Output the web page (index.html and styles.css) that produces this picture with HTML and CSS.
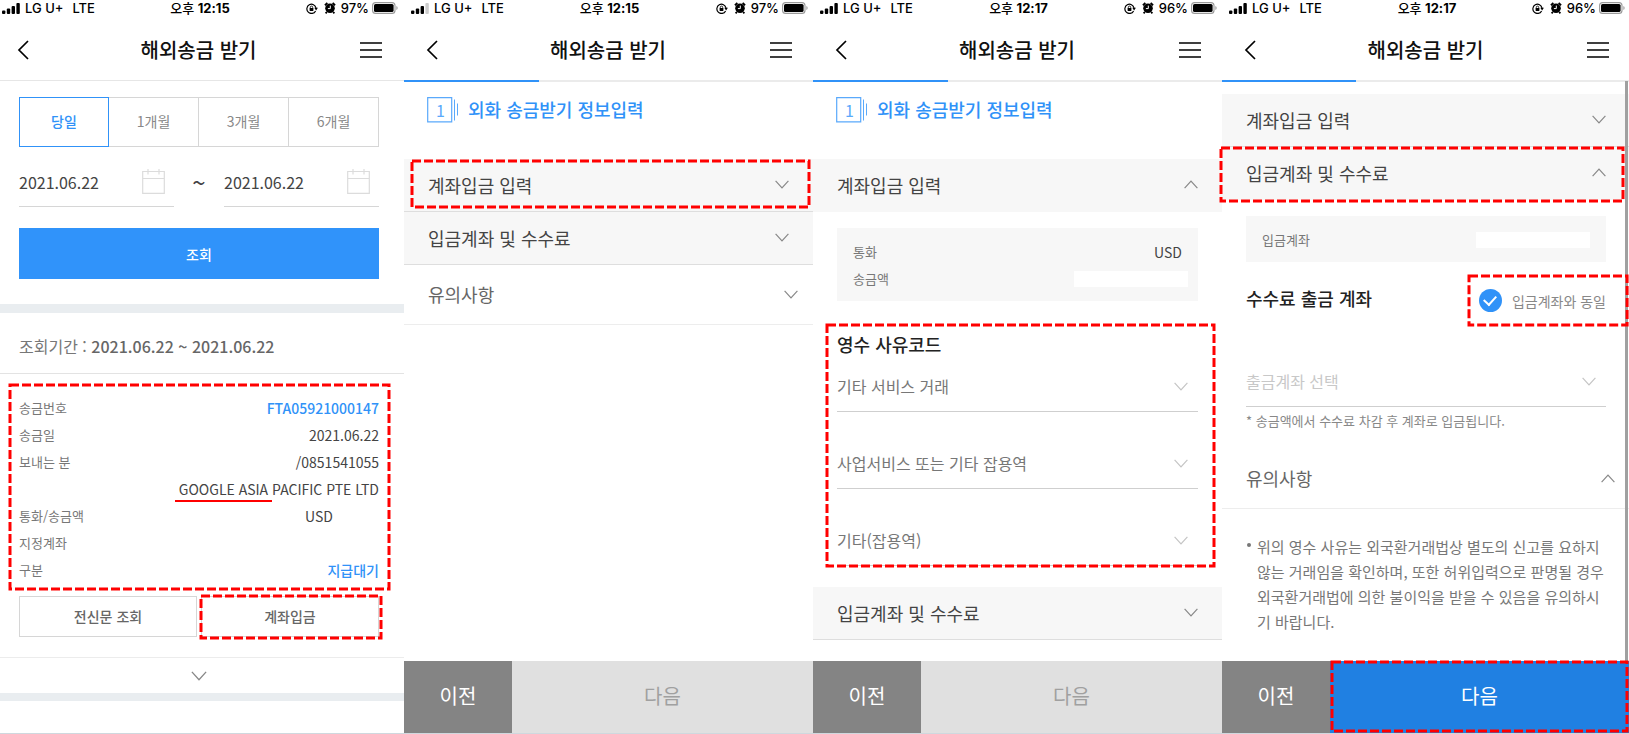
FILE: index.html
```html
<!DOCTYPE html>
<html lang="ko">
<head>
    <meta charset="UTF-8">
    <meta name="viewport" content="width=device-width, initial-scale=1.0">
    <title>해외송금 받기</title>
    <link rel="stylesheet" href="styles.css">
</head>
<body>

    <!-- Shared icons -->
    <svg class="icon-defs" aria-hidden="true">
        <symbol id="icon-signal" viewBox="0 0 18 11">
            <rect x="0" y="7.5" width="3.4" height="3.5" rx="1"/>
            <rect x="4.8" y="5.5" width="3.4" height="5.5" rx="1"/>
            <rect x="9.6" y="3" width="3.4" height="8" rx="1"/>
            <rect class="last-bar" x="14.4" y="0" width="3.4" height="11" rx="1"/>
        </symbol>
        <symbol id="icon-lock" viewBox="0 0 12 11">
            <path d="M9.6 7.9A4.6 4.6 0 1 1 10 5" fill="none" stroke="#000" stroke-width="1.2"/>
            <path d="M8.3 4.8h3.6L10.1 7.4z"/>
            <rect x="3.6" y="5" width="3.8" height="3" rx=".4"/>
            <path d="M4.3 5.2V4.3a1.2 1.2 0 0 1 2.4 0v.9" fill="none" stroke="#000" stroke-width=".8"/>
        </symbol>
        <symbol id="icon-alarm" viewBox="0 0 12 12">
            <circle cx="6" cy="6.3" r="4.8"/>
            <path d="M.9 3.2L3.4 1M11.1 3.2L8.6 1M2.8 10L1.6 11.4M9.2 10l1.2 1.4" fill="none" stroke="#000" stroke-width="1.8"/>
            <path d="M6.3 3.6v3H3.9" fill="none" stroke="#fff" stroke-width="1"/>
        </symbol>
        <symbol id="icon-battery" viewBox="0 0 26 12">
            <rect x=".6" y=".6" width="22.4" height="10.8" rx="3" fill="none" stroke="#9a9a9a" stroke-width="1.1"/>
            <rect x="2" y="2" width="19.6" height="8" rx="1.6"/>
            <path d="M24.4 4v4c.8-.4 1.2-1.1 1.2-2s-.4-1.6-1.2-2z" fill="#9a9a9a"/>
        </symbol>
        <symbol id="icon-back" viewBox="0 0 12 20">
            <path d="M11 1L2 10l9 9" fill="none" stroke="#000" stroke-width="1.7"/>
        </symbol>
        <symbol id="icon-menu" viewBox="0 0 22 18">
            <path d="M0 2h22M0 9h22M0 16h22" fill="none" stroke="#000" stroke-width="1.7"/>
        </symbol>
        <symbol id="icon-chevron" viewBox="0 0 14 9">
            <path d="M.6 .8L7 7.8l6.4-7" fill="none" stroke="currentColor" stroke-width="1.2"/>
        </symbol>
        <symbol id="icon-calendar" viewBox="0 0 23 25">
            <path d="M.7 2.5h21.6v21.8H.7zM.7 9.5h21.6M6 0v5.5M17 0v5.5" fill="none" stroke="#dcdcdc" stroke-width="1.2"/>
        </symbol>
        <symbol id="icon-step" viewBox="0 0 32 26">
            <path d="M.7 .7h24v24.2h-24z" fill="none" stroke="#5aa9fb" stroke-width="1.2"/>
            <path d="M27.5 2.5v21M30.5 6.5v12" fill="none" stroke="#5aa9fb" stroke-width="1"/>
        </symbol>
    </svg>

    <main class="screens">

        <!-- Transfer lookup -->
        <section class="screen screen-first">
            <div class="status-bar">
                <div class="status-left">
                    <svg class="signal"><use href="#icon-signal"/></svg>
                    <span>LG U+</span>
                    <span class="network">LTE</span>
                </div>
                <div class="status-time">오후 <b>12:15</b></div>
                <div class="status-right">
                    <svg class="lock"><use href="#icon-lock"/></svg>
                    <svg class="alarm"><use href="#icon-alarm"/></svg>
                    <span>97%</span>
                    <svg class="battery"><use href="#icon-battery"/></svg>
                </div>
            </div>
            <header class="header">
                <button type="button" aria-label="뒤로"><svg class="back"><use href="#icon-back"/></svg></button>
                <h1>해외송금 받기</h1>
                <button type="button" aria-label="메뉴"><svg class="menu"><use href="#icon-menu"/></svg></button>
            </header>

            <form class="search">
                <div class="tabs">
                    <button type="button" class="active">당일</button>
                    <button type="button">1개월</button>
                    <button type="button">3개월</button>
                    <button type="button">6개월</button>
                </div>
                <div class="dates">
                    <div class="date">
                        <input type="text" value="2021.06.22" aria-label="시작일">
                        <svg><use href="#icon-calendar"/></svg>
                    </div>
                    <span class="tilde">~</span>
                    <div class="date">
                        <input type="text" value="2021.06.22" aria-label="종료일">
                        <svg><use href="#icon-calendar"/></svg>
                    </div>
                </div>
                <button type="button" class="search-button">조회</button>
            </form>

            <div class="band"></div>
            <p class="period">조회기간 : <b>2021.06.22 ~ 2021.06.22</b></p>

            <div class="transfer">
                <dl class="details">
                    <div><dt>송금번호</dt><dd class="blue">FTA05921000147</dd></div>
                    <div><dt>송금일</dt><dd>2021.06.22</dd></div>
                    <div><dt>보내는 분</dt><dd>/0851541055</dd></div>
                    <div><dt></dt><dd><span class="underlined">GOOGLE ASIA</span> PACIFIC PTE LTD</dd></div>
                    <div><dt>통화/송금액</dt><dd class="currency">USD</dd></div>
                    <div><dt>지정계좌</dt><dd></dd></div>
                    <div><dt>구분</dt><dd class="blue">지급대기</dd></div>
                </dl>
                <svg class="mark mark-details"><rect width="100%" height="100%"/></svg>
            </div>
            <div class="actions">
                <button type="button">전신문 조회</button>
                <div class="action">
                    <button type="button">계좌입금</button>
                    <svg class="mark mark-action"><rect width="100%" height="100%"/></svg>
                </div>
            </div>
            <button type="button" class="more" aria-label="더보기"><svg class="chevron"><use href="#icon-chevron"/></svg></button>
            <div class="band band-thin"></div>
        </section>

        <!-- Step 1, all sections closed -->
        <section class="screen">
            <div class="status-bar">
                <div class="status-left weak">
                    <svg class="signal"><use href="#icon-signal"/></svg>
                    <span>LG U+</span>
                    <span class="network">LTE</span>
                </div>
                <div class="status-time">오후 <b>12:15</b></div>
                <div class="status-right">
                    <svg class="lock"><use href="#icon-lock"/></svg>
                    <svg class="alarm"><use href="#icon-alarm"/></svg>
                    <span>97%</span>
                    <svg class="battery"><use href="#icon-battery"/></svg>
                </div>
            </div>
            <header class="header">
                <button type="button" aria-label="뒤로"><svg class="back"><use href="#icon-back"/></svg></button>
                <h1>해외송금 받기</h1>
                <button type="button" aria-label="메뉴"><svg class="menu"><use href="#icon-menu"/></svg></button>
            </header>
            <div class="progress"><div></div></div>

            <div class="step">
                <span class="step-number"><svg><use href="#icon-step"/></svg>1</span>
                <h2>외화 송금받기 정보입력</h2>
            </div>
            <div class="accordion">
                <button type="button">계좌입금 입력<svg class="chevron"><use href="#icon-chevron"/></svg></button>
                <svg class="mark mark-deposit"><rect width="100%" height="100%"/></svg>
            </div>
            <div class="accordion">
                <button type="button">입금계좌 및 수수료<svg class="chevron"><use href="#icon-chevron"/></svg></button>
            </div>
            <div class="accordion notice">
                <button type="button">유의사항<svg class="chevron"><use href="#icon-chevron"/></svg></button>
            </div>

            <footer class="footer">
                <button type="button" class="prev">이전</button>
                <div class="next"><button type="button" disabled>다음</button></div>
            </footer>
        </section>

        <!-- Step 1, reason code -->
        <section class="screen">
            <div class="status-bar">
                <div class="status-left">
                    <svg class="signal"><use href="#icon-signal"/></svg>
                    <span>LG U+</span>
                    <span class="network">LTE</span>
                </div>
                <div class="status-time">오후 <b>12:17</b></div>
                <div class="status-right">
                    <svg class="lock"><use href="#icon-lock"/></svg>
                    <svg class="alarm"><use href="#icon-alarm"/></svg>
                    <span>96%</span>
                    <svg class="battery"><use href="#icon-battery"/></svg>
                </div>
            </div>
            <header class="header">
                <button type="button" aria-label="뒤로"><svg class="back"><use href="#icon-back"/></svg></button>
                <h1>해외송금 받기</h1>
                <button type="button" aria-label="메뉴"><svg class="menu"><use href="#icon-menu"/></svg></button>
            </header>
            <div class="progress"><div></div></div>

            <div class="step">
                <span class="step-number"><svg><use href="#icon-step"/></svg>1</span>
                <h2>외화 송금받기 정보입력</h2>
            </div>
            <div class="accordion open">
                <button type="button">계좌입금 입력<svg class="chevron up"><use href="#icon-chevron"/></svg></button>
            </div>
            <dl class="info">
                <div><dt>통화</dt><dd>USD</dd></div>
                <div><dt>송금액</dt><dd class="blank blank-wide"></dd></div>
            </dl>
            <div class="reason">
                <h3>영수 사유코드</h3>
                <div class="field">
                    <select aria-label="사유 대분류"><option>기타 서비스 거래</option></select>
                    <svg class="chevron"><use href="#icon-chevron"/></svg>
                </div>
                <div class="field">
                    <select aria-label="사유 중분류"><option>사업서비스 또는 기타 잡용역</option></select>
                    <svg class="chevron"><use href="#icon-chevron"/></svg>
                </div>
                <div class="field">
                    <select aria-label="사유 소분류"><option>기타(잡용역)</option></select>
                    <svg class="chevron"><use href="#icon-chevron"/></svg>
                </div>
                <svg class="mark mark-reason"><rect width="100%" height="100%"/></svg>
            </div>
            <div class="accordion">
                <button type="button">입금계좌 및 수수료<svg class="chevron"><use href="#icon-chevron"/></svg></button>
            </div>

            <footer class="footer">
                <button type="button" class="prev">이전</button>
                <div class="next"><button type="button" disabled>다음</button></div>
            </footer>
        </section>

        <!-- Step 1, account and fee -->
        <section class="screen screen-last">
            <div class="status-bar">
                <div class="status-left">
                    <svg class="signal"><use href="#icon-signal"/></svg>
                    <span>LG U+</span>
                    <span class="network">LTE</span>
                </div>
                <div class="status-time">오후 <b>12:17</b></div>
                <div class="status-right">
                    <svg class="lock"><use href="#icon-lock"/></svg>
                    <svg class="alarm"><use href="#icon-alarm"/></svg>
                    <span>96%</span>
                    <svg class="battery"><use href="#icon-battery"/></svg>
                </div>
            </div>
            <header class="header">
                <button type="button" aria-label="뒤로"><svg class="back"><use href="#icon-back"/></svg></button>
                <h1>해외송금 받기</h1>
                <button type="button" aria-label="메뉴"><svg class="menu"><use href="#icon-menu"/></svg></button>
            </header>
            <div class="progress"><div></div></div>

            <div class="scroll-area">
                <div class="accordion">
                    <button type="button">계좌입금 입력<svg class="chevron"><use href="#icon-chevron"/></svg></button>
                </div>
                <div class="accordion open">
                    <button type="button">입금계좌 및 수수료<svg class="chevron up"><use href="#icon-chevron"/></svg></button>
                    <svg class="mark mark-fee"><rect width="100%" height="100%"/></svg>
                </div>
                <dl class="info">
                    <div><dt>입금계좌</dt><dd class="blank"></dd></div>
                </dl>
                <div class="fee">
                    <h3>수수료 출금 계좌</h3>
                    <div class="same">
                        <input type="checkbox" id="same" checked>
                        <label for="same">입금계좌와 동일</label>
                        <svg class="mark mark-same"><rect width="100%" height="100%"/></svg>
                    </div>
                </div>
                <div class="field field-account">
                    <select aria-label="출금계좌" disabled><option>출금계좌 선택</option></select>
                    <svg class="chevron"><use href="#icon-chevron"/></svg>
                </div>
                <p class="hint">* 송금액에서 수수료 차감 후 계좌로 입금됩니다.</p>
                <div class="accordion notice">
                    <button type="button">유의사항<svg class="chevron up"><use href="#icon-chevron"/></svg></button>
                </div>
                <ul class="notes">
                    <li>위의 영수 사유는 외국환거래법상 별도의 신고를 요하지 않는 거래임을 확인하며, 또한 허위입력으로 판명될 경우 외국환거래법에 의한 불이익을 받을 수 있음을 유의하시기 바랍니다.</li>
                </ul>
                <div class="scrollbar"></div>
            </div>

            <footer class="footer">
                <button type="button" class="prev">이전</button>
                <div class="next">
                    <button type="button">다음</button>
                    <svg class="mark mark-next"><rect width="100%" height="100%"/></svg>
                </div>
            </footer>
        </section>

    </main>

</body>
</html>
```

FILE: styles.css
```css
/* General Styles */
* {
    box-sizing: border-box;
}

body {
    font-family: "Noto Sans CJK KR", sans-serif;
    background-color: #fff;
    color: #444;
    margin: 0;
}

h1, h2, h3, p, dl, dd, ul {
    margin: 0;
    padding: 0;
}

button, input, select {
    font-family: inherit;
    color: inherit;
    background: none;
    border: none;
    border-radius: 0;
    margin: 0;
    padding: 0;
}

button {
    cursor: pointer;
}

svg {
    display: block;
    flex: none;
}

.icon-defs {
    position: absolute;
    width: 0;
    height: 0;
}

.screens {
    display: grid;
    grid-template-columns: 404fr 409fr 409fr 407fr;
    min-height: 100vh;
    border-bottom: 1px solid #cfd8de;
}

.screen {
    --left: 24px;
    --right: 24px;
    display: flex;
    flex-direction: column;
    min-width: 0;
}

.screen-first {
    --left: 19px;
    --right: 25px;
}

.screen-last {
    --right: 23px;
}

/* Status bar */
.status-bar {
    display: grid;
    grid-template-columns: 1fr auto 1fr;
    align-items: center;
    height: 16px;
    padding: 0 calc(var(--right) - 19px) 0 calc(var(--left) - 17px);
    font-family: Inter, "Noto Sans CJK KR", sans-serif;
    font-size: 13px;
    font-weight: 500;
    line-height: 16px;
    color: #000;
    white-space: nowrap;
}

.status-left, .status-right {
    display: flex;
    align-items: center;
}

.status-right {
    justify-content: flex-end;
}

.signal {
    width: 18px;
    height: 11px;
    margin-right: 5px;
}

.weak {
    --last-bar: #ccc;
}

.last-bar {
    fill: var(--last-bar, #000);
}

.network {
    margin-left: 9px;
}

.status-time b {
    font-weight: 700;
}

.lock {
    width: 12px;
    height: 11px;
    margin-right: 6px;
}

.alarm {
    width: 12px;
    height: 12px;
    margin-right: 5px;
}

.battery {
    width: 26px;
    height: 12px;
    margin-left: 3px;
}

/* Header */
.header {
    display: flex;
    align-items: center;
    justify-content: space-between;
    height: 64px;
    padding: 4px calc(var(--right) - 3px) 0 calc(var(--left) - 2px);
}

.header h1 {
    font-size: 20px;
    font-weight: 500;
    line-height: 30px;
    color: #111;
}

.back {
    width: 12px;
    height: 20px;
    margin-right: 8px;
}

.menu {
    width: 22px;
    height: 18px;
}

.progress {
    height: 2px;
    background-color: #ebebeb;
}

.progress div {
    width: 33%;
    height: 2px;
    background-color: #3092f8;
}

/* Search form */
.search {
    border-top: 1px solid #e6e6e6;
    padding: 16px var(--right) 25px var(--left);
}

.tabs {
    display: grid;
    grid-template-columns: repeat(4, 1fr);
    height: 50px;
}

.tabs button {
    padding-bottom: 2px;
    border: 1px solid #d6d6d6;
    border-left: none;
    font-size: 14px;
    color: #888;
}

.tabs .active {
    border: 1px solid #3092f8;
    font-weight: 500;
    color: #3092f8;
}

.dates {
    display: flex;
    align-items: center;
    margin-top: 10px;
}

.date {
    flex: 1;
    display: flex;
    align-items: center;
    min-width: 0;
    height: 50px;
    padding-right: 9px;
    border-bottom: 1px solid #d6d6d6;
}

.date input {
    flex: 1;
    min-width: 0;
    font-size: 16px;
    line-height: 24px;
}

.date svg {
    width: 23px;
    height: 25px;
}

.tilde {
    width: 50px;
    text-align: center;
    font-size: 24px;
    line-height: 24px;
}

.search-button {
    width: 100%;
    height: 51px;
    margin-top: 21px;
    background-color: #3093fa;
    font-size: 14px;
    font-weight: 500;
    color: #fff;
}

.band {
    height: 9px;
    background-color: #e9edf0;
}

.band-thin {
    height: 8px;
}

.period {
    padding: 21px var(--right) 15px var(--left);
    border-bottom: 1px solid #e3e3e3;
    font-size: 16px;
    line-height: 24px;
    color: #777;
}

.period b {
    font-weight: 500;
    color: #666;
}

/* Transfer details */
.transfer {
    position: relative;
    padding: 20px var(--right) 2px var(--left);
}

.details div, .info div {
    display: flex;
    justify-content: space-between;
    align-items: center;
    height: 27px;
}

dt {
    font-size: 13px;
    color: #777;
}

dd {
    font-size: 14px;
    color: #444;
}

dd.blue {
    font-weight: 500;
    color: #3092f8;
}

.currency {
    margin-right: 46px;
}

.underlined {
    position: relative;
}

.underlined::after {
    content: "";
    position: absolute;
    left: -4px;
    right: -4px;
    bottom: -3px;
    height: 2px;
    background-color: #f00;
}

.actions {
    display: grid;
    grid-template-columns: 1fr 1fr;
    gap: 4px;
    padding: 11px var(--right) 20px var(--left);
}

.actions button {
    width: 100%;
    height: 41px;
    padding-bottom: 2px;
    border: 1px solid #d6d6d6;
    font-size: 14px;
    font-weight: 500;
    color: #666;
}

.action {
    position: relative;
}

.more {
    display: flex;
    align-items: center;
    justify-content: center;
    height: 36px;
    padding: 0 var(--right) 0 var(--left);
    border-top: 1px solid #ececec;
}

.more .chevron {
    width: 16px;
    height: 10px;
}

/* Red dashed marks */
.mark {
    position: absolute;
    overflow: visible;
    pointer-events: none;
    z-index: 1;
}

.mark rect {
    fill: none;
    stroke: #f00;
    stroke-width: 3;
    stroke-dasharray: 9 3;
}

.mark-details {
    left: 10px;
    top: 11px;
    width: calc(100% - 25px);
    height: calc(100% - 7px);
}

.mark-action {
    left: 0;
    top: 0;
    width: calc(100% + 2px);
    height: calc(100% + 1px);
}

.mark-deposit {
    left: 8px;
    top: 2px;
    width: calc(100% - 12px);
    height: calc(100% - 6px);
}

.mark-reason {
    left: 14px;
    top: -6px;
    width: calc(100% - 22px);
    height: calc(100% + 6px);
}

.mark-fee {
    left: -1px;
    top: 1px;
    width: calc(100% - 5px);
    height: 53px;
}

.mark-same {
    left: -10px;
    top: -8px;
    width: calc(100% + 31px);
    height: calc(100% + 16px);
}

.mark-next {
    left: 2px;
    top: 1px;
    width: calc(100% - 4px);
    height: calc(100% - 3px);
}

/* Step title */
.step {
    display: flex;
    align-items: center;
    gap: 9px;
    padding: 15px var(--right) 36px calc(var(--left) - 1px);
}

.step-number {
    position: relative;
    width: 32px;
    height: 26px;
    padding-left: 9px;
    font-size: 16px;
    line-height: 26px;
    color: #5aa9fb;
}

.step-number svg {
    position: absolute;
    left: 0;
    top: 0;
    width: 32px;
    height: 26px;
}

.step h2 {
    padding-bottom: 2px;
    font-size: 18px;
    font-weight: 500;
    line-height: 24px;
    color: #3092f8;
}

/* Accordion */
.accordion {
    position: relative;
    background-color: #f7f7f7;
    border-bottom: 1px solid #dedede;
}

.accordion.open {
    border-bottom-color: #f7f7f7;
}

.accordion button {
    display: flex;
    align-items: center;
    justify-content: space-between;
    width: 100%;
    height: 52px;
    padding: 0 var(--right) 1px var(--left);
    font-size: 18px;
    color: #444;
}

.chevron {
    width: 14px;
    height: 9px;
    color: #888;
}

.chevron.up {
    transform: rotate(180deg);
}

.accordion.notice {
    background-color: #fff;
    border-bottom-color: #ededed;
}

.notice button {
    height: 59px;
    padding-right: calc(var(--right) - 9px);
    color: #666;
}

/* Info box */
.info {
    margin: 16px var(--right) 0 var(--left);
    padding: 10px 16px 9px;
    background-color: #f7f7f7;
}

.blank {
    width: 114px;
    height: 16px;
    background-color: #fff;
}

.blank-wide {
    margin-right: -6px;
}

/* Reason code */
.reason {
    position: relative;
    margin-top: 30px;
    margin-bottom: 21px;
}

h3 {
    font-size: 18px;
    font-weight: 500;
    line-height: 27px;
    color: #222;
}

.reason h3 {
    padding: 0 var(--right) 4px var(--left);
}

.field {
    display: flex;
    align-items: center;
    height: 50px;
    margin: 0 var(--right) 0 var(--left);
    border-bottom: 1px solid #cfcfcf;
}

.field + .field {
    margin-top: 27px;
}

.field select {
    appearance: none;
    width: 100%;
    height: 49px;
    padding-bottom: 2px;
    font-size: 16px;
    color: #777;
    opacity: 1;
}

.field .chevron {
    margin-left: -24px;
    margin-right: 10px;
    color: #c4c4c4;
    pointer-events: none;
}

/* Account and fee */
.scroll-area {
    position: relative;
    flex: 1;
    padding-top: 12px;
}

.fee {
    display: flex;
    align-items: center;
    justify-content: space-between;
    margin: 22px var(--right) 0 var(--left);
}

.fee h3 {
    padding-bottom: 4px;
}

.same {
    position: relative;
    display: flex;
    align-items: center;
    gap: 10px;
    height: 33px;
}

.same label {
    font-size: 14px;
    color: #888;
}

.same input {
    appearance: none;
    display: flex;
    align-items: center;
    justify-content: center;
    width: 23px;
    height: 23px;
    border-radius: 50%;
    background-color: #3092f8;
}

.same input::after {
    content: "";
    width: 6px;
    height: 10px;
    margin-bottom: 3px;
    border: solid #fff;
    border-width: 0 2px 2px 0;
    transform: rotate(42deg);
}

.field-account {
    margin-top: 40px;
}

.field-account select {
    color: #c8c8c8;
}

.hint {
    margin: 4px var(--right) 18px var(--left);
    font-size: 13px;
    line-height: 20px;
    color: #888;
}

.notes {
    margin: 25px var(--right) 0 var(--left);
    list-style: none;
    font-size: 15px;
    line-height: 25px;
    color: #777;
    word-break: break-all;
}

.notes li {
    position: relative;
    padding-left: 11px;
}

.notes li::before {
    content: "";
    position: absolute;
    left: 1px;
    top: 9px;
    width: 4px;
    height: 4px;
    border-radius: 50%;
    background-color: #777;
}

.scrollbar {
    position: absolute;
    top: -1px;
    right: 1px;
    bottom: 0;
    width: 3px;
    background-color: #a0a0a0;
}

/* Footer */
.footer {
    display: flex;
    height: 72px;
    margin-top: auto;
}

.footer button {
    width: 100%;
    height: 100%;
    padding-bottom: 4px;
    background-color: #2080e2;
    font-size: 20px;
    color: #fff;
}

.footer .prev {
    width: 108px;
    background-color: #848484;
}

.next {
    position: relative;
    flex: 1;
}

.footer button:disabled {
    background-color: #e0e0e0;
    color: #a0a0a0;
}
```
